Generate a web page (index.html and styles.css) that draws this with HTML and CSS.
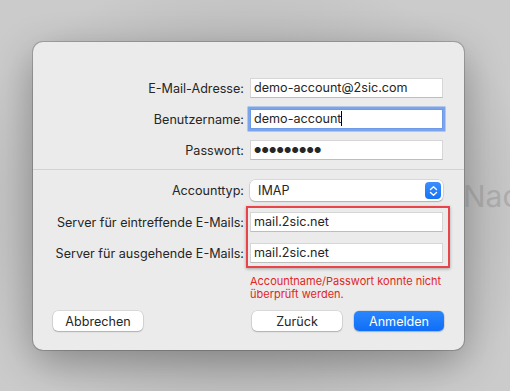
FILE: index.html
```html
<!DOCTYPE html>
<html lang="de">
<head>
    <meta charset="UTF-8">
    <title>Account hinzufügen</title>
    <link rel="stylesheet" href="styles.css">
</head>
<body>

<div class="backdrop-text">Nach</div>

<div class="dialog">
    <div class="form-grid">
        <label>E-Mail-Adresse:</label>
        <div class="field">demo-account@2sic.com</div>

        <label>Benutzername:</label>
        <div class="field focused">demo-account<span class="caret"></span></div>

        <label>Passwort:</label>
        <div class="field dots">●●●●●●●●●</div>
    </div>

    <hr class="separator">

    <div class="form-grid">
        <label>Accounttyp:</label>
        <div class="select">
            <span>IMAP</span>
            <span class="stepper">
                <svg width="9" height="12" viewBox="0 0 9 12">
                    <path d="M1.5 4.5 L4.5 1.8 L7.5 4.5 M1.5 7.5 L4.5 10.2 L7.5 7.5" fill="none" stroke="white" stroke-width="1.4" stroke-linecap="round" stroke-linejoin="round"/>
                </svg>
            </span>
        </div>

        <label>Server für eintreffende E-Mails:</label>
        <div class="field">mail.2sic.net</div>

        <label>Server für ausgehende E-Mails:</label>
        <div class="field">mail.2sic.net</div>

        <span></span>
        <p class="error">Accountname/Passwort konnte nicht überprüft werden.</p>
    </div>

    <div class="highlight"></div>

    <div class="buttons">
        <button class="btn">Abbrechen</button>
        <div class="right-buttons">
            <button class="btn">Zurück</button>
            <button class="btn primary">Anmelden</button>
        </div>
    </div>
</div>

</body>
</html>
```

FILE: styles.css
```css
body {
    margin: 0;
    width: 510px;
    height: 391px;
    overflow: hidden;
    position: relative;
    font-family: "Inter", "Liberation Sans", sans-serif;
    background: radial-gradient(ellipse 300px 240px at 248px 210px, #a2a2a2 0%, #b9b9b9 60%, #cbcbcb 100%);
    background-color: #cbcbcb;
}
.backdrop-text {
    position: absolute;
    left: 463px;
    top: 178px;
    font-size: 30px;
    color: #acacac;
    font-family: "Inter", "Liberation Sans", sans-serif;
}
.dialog {
    position: relative;
    margin: 42px 0 0 33px;
    width: 431px;
    height: 308px;
    box-sizing: border-box;
    padding-top: 36px;
    background-color: #ebebeb;
    border-radius: 10px;
    box-shadow: 0 0 0 1px rgba(0, 0, 0, 0.18), 0 12px 40px rgba(0, 0, 0, 0.3);
    color: #262626;
    font-size: 12.6px;
}
.form-grid {
    display: grid;
    grid-template-columns: 1fr 193px;
    column-gap: 6px;
    row-gap: 11px;
    padding-right: 21px;
    align-items: center;
}
.form-grid label {
    text-align: right;
    white-space: nowrap;
}
.field {
    height: 20px;
    box-sizing: border-box;
    background: white;
    border: 1px solid #d6d6d6;
    border-bottom-color: #bdbdbd;
    padding: 0 3px;
    line-height: 18px;
    white-space: nowrap;
}
.field.focused {
    box-shadow: 0 0 0 2.5px #7ba4eb;
    border-color: #6d9be8;
}
.caret {
    display: inline-block;
    width: 1px;
    height: 15px;
    background: #000;
    vertical-align: -3px;
}
.dots {
    font-size: 8px;
    letter-spacing: 0.2px;
    line-height: 18px;
}
.separator {
    border: none;
    border-top: 1px solid #d2d2d2;
    margin: 9px 0 10px;
}
.select {
    height: 21px;
    box-sizing: border-box;
    background: white;
    border-radius: 5px;
    box-shadow: 0 0 0 0.5px rgba(0, 0, 0, 0.15), 0 1px 1.5px rgba(0, 0, 0, 0.2);
    display: flex;
    align-items: center;
    justify-content: space-between;
    padding: 0 2px 0 8px;
}
.stepper {
    width: 16px;
    height: 17px;
    border-radius: 4px;
    background: linear-gradient(#3d8ffd, #1573f5);
    display: flex;
    align-items: center;
    justify-content: center;
}
.error {
    margin: 0;
    padding-top: 1px;
    color: #e0261f;
    font-size: 11px;
    line-height: 13px;
}
.highlight {
    position: absolute;
    left: 213px;
    top: 164px;
    width: 204px;
    height: 62px;
    box-sizing: border-box;
    border: 2px solid #e8454a;
    box-shadow: 0 1px 3px rgba(0, 0, 0, 0.3);
}
.buttons {
    display: flex;
    justify-content: space-between;
    padding: 10px 20px 0 20px;
}
.right-buttons {
    display: flex;
    gap: 12px;
}
.btn {
    width: 90px;
    height: 20px;
    padding: 0;
    border: none;
    border-radius: 5px;
    background: white;
    box-shadow: 0 0 0 0.5px rgba(0, 0, 0, 0.15), 0 1px 1.5px rgba(0, 0, 0, 0.2);
    font-family: "Inter", "Liberation Sans", sans-serif;
    font-size: 12.6px;
    color: #262626;
}
.btn.primary {
    background: linear-gradient(#2b86fd, #0f6ef7);
    color: white;
}
```
